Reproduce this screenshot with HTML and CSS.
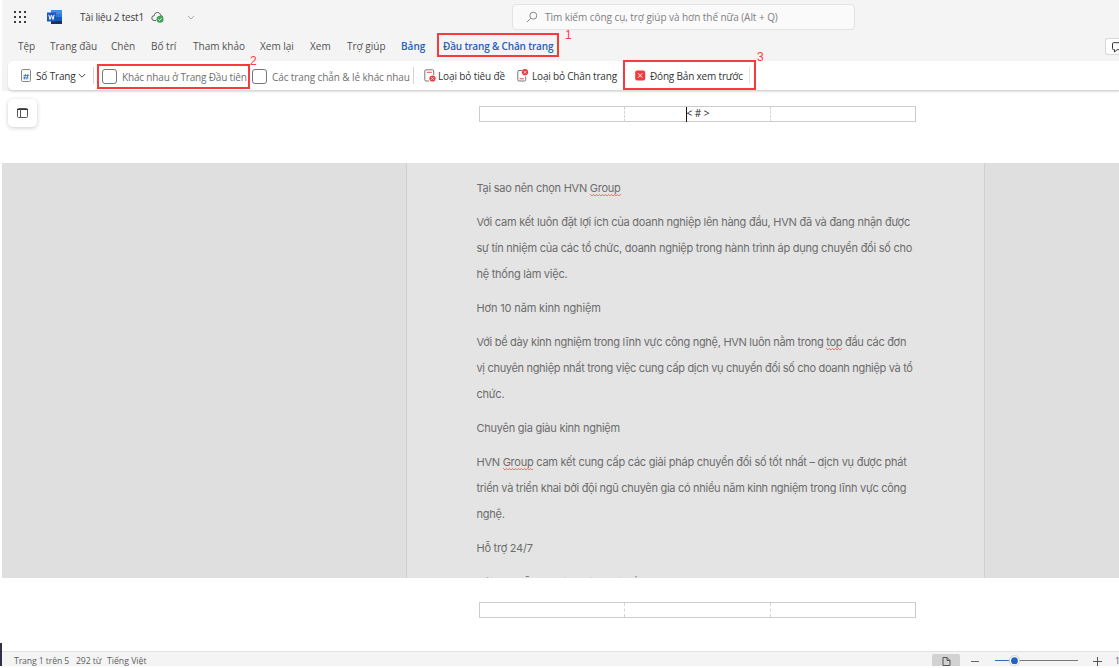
FILE: index.html
```
<!DOCTYPE html>
<html lang="vi">
<head>
<meta charset="utf-8">
<title>Tài liệu 2 test1</title>
<link rel="stylesheet" href="styles.css">
</head>
<body>
<div class="app">
  <header class="top">
    <div class="titlebar">
      <svg class="waffle" width="12" height="12" viewBox="0 0 12 12" fill="#3a3a40"><path d="M0 0h2v2H0zM5 0h2v2H5zM10 0h2v2h-2zM0 5h2v2H0zM5 5h2v2H5zM10 5h2v2h-2zM0 10h2v2H0zM5 10h2v2H5zM10 10h2v2h-2z"/></svg>
      <svg class="word" width="15" height="14" viewBox="0 0 15 14"><rect x="4" y="0" width="11" height="14" rx="1" fill="#2b7cd3"/><rect x="4" y="0" width="11" height="4" fill="#3f8fdc"/><rect x="4" y="7" width="11" height="4" fill="#185abd"/><rect x="4" y="11" width="11" height="3" fill="#17325f"/><rect x="0" y="2.5" width="9" height="9" fill="#185abd"/><path d="M1.800 4.800l1.200 4.700 1.500-4.500 1.500 4.500 1.200-4.700" fill="none" stroke="#fff" stroke-width="1"/></svg>
      <span class="docname">Tài liệu 2 test1</span>
      <svg class="cloud" width="13" height="12" viewBox="0 0 13 12"><path d="M5 9.500H3.200a2.400 2.400 0 0 1 0-4.800C3.400 2.700 4.600 1.500 6.400 1.500s3 1.200 3.300 3c1.200 0 1.800.7 2 1.500" fill="none" stroke="#555" stroke-width="1"/><circle cx="9" cy="8.200" r="3.500" fill="#3fa35c"/><path d="M7.400 8.300l1.200 1.100 2-2.200" fill="none" stroke="#fff" stroke-width=".9"/></svg>
      <svg class="more" width="8" height="5" viewBox="0 0 8 5"><path d="M1 1l3 3 3-3" fill="none" stroke="#aaa"/></svg>
      <div class="search">
        <svg width="12" height="12" viewBox="0 0 12 12"><path d="M4.500 7.500L1 11" stroke="#888" fill="none"/><circle cx="7.300" cy="4.700" r="3.500" fill="none" stroke="#888"/></svg>
        <span>Tìm kiếm công cụ, trợ giúp và hơn thế nữa (Alt + Q)</span>
      </div>
    </div>
    <nav class="tabs">
      <span>Tệp</span><span>Trang đầu</span><span>Chèn</span><span>Bố trí</span><span>Tham khảo</span><span>Xem lại</span><span>Xem</span><span>Trợ giúp</span><span class="ctx">Bảng</span><span class="ctx active">Đầu trang &amp; Chân trang</span>
      <div class="comment"><svg width="12" height="11" viewBox="0 0 12 11"><path d="M11 .7H1.500a1 1 0 0 0-1 1v5a1 1 0 0 0 1 1H2.500v2.300l2.600-2.300H12" fill="none" stroke="#333"/></svg></div>
    </nav>
    <div class="ribbon">
      <svg width="10" height="13" viewBox="0 0 10 13"><rect x=".5" y=".5" width="9" height="12" rx="1.200" fill="#f8f8f8" stroke="#888"/><path d="M4.500 5L3.300 10.500M7 5L5.800 10.500M2.500 6.600h5.500M2 8.900h5.500" stroke="#2b6cc4" stroke-width=".8"/></svg>
      <span class="dark num">Số Trang</span>
      <svg width="8" height="6" viewBox="0 0 8 6"><path d="M.8 1l3.200 3.200L7.200 1" fill="none" stroke="#444"/></svg>
      <i class="sep"></i>
      <i class="box"></i><span class="first">Khác nhau ở Trang Đầu tiên</span>
      <i class="box"></i><span class="odd">Các trang chẵn &amp; lẻ khác nhau</span>
      <i class="sep"></i>
      <svg width="12" height="13" viewBox="0 0 12 13"><path d="M5 12H2a1.200 1.200 0 0 1-1.200-1.200V2A1.200 1.200 0 0 1 2 .8h6.500A1.200 1.200 0 0 1 9.700 2v4" fill="none" stroke="#777"/><path d="M2.800 3.300h5" stroke="#f04a4a"/><circle cx="8.500" cy="9.500" r="3.100" fill="#f03a3e"/><path d="M7.200 8.200l2.600 2.600m0-2.600l-2.600 2.600" stroke="#fff" stroke-width=".7"/></svg>
      <span class="dark rmh">Loại bỏ tiêu đề</span>
      <svg width="12" height="13" viewBox="0 0 12 13"><path d="M5 1.500H2A1.200 1.200 0 0 0 .8 2.700v8A1.200 1.200 0 0 0 2 12h5.500a1.200 1.200 0 0 0 1.200-1.200V7.500" fill="none" stroke="#777"/><path d="M2.500 9.800h4.500" stroke="#f04a4a"/><circle cx="8" cy="3.200" r="3.100" fill="#f03a3e"/><path d="M6.700 1.900l2.600 2.600m0-2.600L6.700 4.500" stroke="#fff" stroke-width=".7"/></svg>
      <span class="dark rmf">Loại bỏ Chân trang</span>
      <svg width="11" height="11" viewBox="0 0 11 11"><rect x=".2" y=".5" width="10" height="10" rx="2" fill="#f03a3e"/><path d="M3.100 3.300l4.200 4.400m0-4.400L3.100 7.700" stroke="#fff"/></svg>
      <span class="dark close">Đóng Bản xem trước</span>
      <i class="sep light"></i>
    </div>
  </header>

  <section class="margin head">
    <button class="pane"><svg width="11" height="10" viewBox="0 0 11 10"><rect x=".5" y=".5" width="10" height="9" rx="1" fill="#fff" stroke="#555"/><path d="M0 1.500h11" stroke="#333"/><path d="M3.500 1.500v8" stroke="#555"/></svg></button>
    <div class="cells"><div></div><div><b class="caret"></b>&lt; # &gt;</div><div></div></div>
  </section>

  <main class="canvas">
    <article class="page">
      <p>Tại sao nên chọn HVN <u>Group</u></p>
      <p>Với cam kết luôn đặt lợi ích của doanh nghiệp lên hàng đầu, HVN đã và đang nhận được<br>sự tín nhiệm của các tổ chức, doanh nghiệp trong hành trình áp dụng chuyển đổi số cho<br>hệ thống làm việc.</p>
      <p class="wide">Hơn 10 năm kinh nghiệm</p>
      <p><span class="snug">Với bề dày kinh nghiệm trong lĩnh vực công nghệ, HVN luôn nằm trong <u>top</u> đầu các đơn</span><br><span class="tight">vị chuyên nghiệp nhất trong việc cung cấp dịch vụ chuyển đổi số cho doanh nghiệp và tổ</span><br>chức.</p>
      <p>Chuyên gia giàu kinh nghiệm</p>
      <p>HVN <u>Group</u> cam kết cung cấp các giải pháp chuyển đổi số tốt nhất – dịch vụ được phát<br><span class="snug">triển và triển khai bởi đội ngũ chuyên gia có nhiều năm kinh nghiệm trong lĩnh vực công</span><br>nghệ.</p>
      <p>Hỗ trợ 24/7</p>
      <p class="next">Đội ngũ hỗ trợ khách hàng có kết</p>
    </article>
  </main>

  <section class="margin foot"><div class="cells"><div></div><div></div><div></div></div></section>

  <footer class="status">
    <span class="s1">Trang 1 trên 5</span><span class="s2">292 từ</span><span class="s3">Tiếng Việt</span>
    <div class="view"><svg width="9" height="11" viewBox="0 0 9 11"><path d="M1 1.500h4L8 4.500v5H1zM5 1.500v3h3" fill="none" stroke="#555"/></svg></div>
    <i class="minus"></i>
    <svg class="slider" width="84" height="12" viewBox="0 0 84 12"><path d="M0 5.500h18" stroke="#2b6cc4"/><path d="M20 5.500h63" stroke="#777"/><circle cx="19.500" cy="5.800" r="5.200" fill="#fff" stroke="#ccc"/><circle cx="19.500" cy="5.800" r="3.500" fill="#2464c4"/></svg>
    <svg class="plus" width="9" height="9" viewBox="0 0 9 9"><path d="M0 4.500h9M4.500 0v9" stroke="#555"/></svg>
    <span class="pct">100%</span>
  </footer>

  <i class="edge"></i>
  <i class="mark m1"></i><b class="no n1">1</b>
  <i class="mark m2"></i><b class="no n2">2</b>
  <i class="mark m3"></i><b class="no n3">3</b>
</div>
</body>
</html>
```
FILE: styles.css
```
* { box-sizing: border-box; }
body { margin: 0; background: #fff; font-family: "Open Sans", "Noto Sans", sans-serif; font-size: 10px; color: #505050; }
svg { display: block; flex: none; }
.app { position: relative; width: 1119px; height: 668px; overflow: hidden; padding-left: 2px; display: flex; flex-direction: column; white-space: nowrap; }
.top { background: #f4f4f4; height: 91px; flex: none; position: relative; z-index: 1; }

.titlebar { height: 34px; display: flex; align-items: center; padding-left: 12px; }
.word { margin-left: 21px; }
.docname { width: 64px; margin-left: 18px; color: #3c3c3c; letter-spacing: -.2px; }
.cloud { margin-left: 7px; }
.more { margin-left: 23px; }
.search { margin-left: 317px; width: 343px; height: 26px; border: 1px solid #e3e3e3; border-radius: 4px; background: #fafafa; display: flex; align-items: center; padding-left: 13px; gap: 7px; color: #808080; letter-spacing: -.05px; }

.tabs { height: 27px; display: grid; grid-template-columns: 32px 61px 40px 42px 67px 50px 37px 54px 42px 110px 1fr; padding-left: 16px; align-items: center; line-height: 24px; padding-bottom: 3px; }
.ctx { color: #2560b8; font-weight: 600; }
.active { border-bottom: 1px solid #2560b8; line-height: 16px; height: 18px; margin-top: 2px; letter-spacing: -.17px; }
.comment { justify-self: end; width: 14px; height: 17px; background: #fff; border: 1px solid #d8d8d8; border-right: 0; border-radius: 3px 0 0 3px; padding: 3px 0 0 6px; overflow: hidden; }

.ribbon { margin-left: 6px; height: 30px; background: #fff; border-bottom: 1px solid #d9d9d9; border-radius: 5px 0 0 5px; box-shadow: 0 1px 2px #0002; display: grid; grid-template-columns: 15px 42px 15px 9px 20px 130px 19px 142px 10px 14px 79px 15px 103px 15px 100px 1px; align-items: center; padding-left: 13px; color: #707070; }
.dark { color: #333; }
.num { letter-spacing: -.15px; }
.sep { width: 1px; height: 17px; background: #d4d4d4; }
.light { background: #e6e6e6; }
.box { width: 15px; height: 15px; border: 1px solid #777; border-radius: 3px; position: relative; top: 1px; }
.first, .odd { padding-top: 2px; }
.first { letter-spacing: -.17px; }
.odd { padding-left: 1px; letter-spacing: -.1px; }
.rmh { padding-left: 1px; letter-spacing: -.12px; }
.rmf { padding-left: 1px; letter-spacing: -.18px; }
.close { padding-left: 1px; letter-spacing: -.18px; }
.ribbon .sep ~ svg { margin-left: 1px; }

.margin { display: flex; justify-content: flex-start; flex: none; }
.head { height: 72px; padding-left: 6px; }
.pane { width: 29px; height: 28px; margin: 8px 442px 0 0; padding: 0; border: 0; border-radius: 5px; background: #fff; box-shadow: 0 1px 4px #0003; display: grid; place-items: center; }
.cells { width: 437px; height: 16px; margin-top: 15px; border: 1px solid #ccc; display: grid; grid-template-columns: 145px 146px 144px; }
.cells > div { text-align: center; line-height: 13px; font-size: 10px; color: #222; }
.cells > div + div { border-left: 1px dashed #d4d4d4; margin-left: -1px; }
.caret { display: inline-block; width: 1px; height: 15px; margin-right: -1px; background: #111; vertical-align: top; }

.canvas { height: 415px; flex: none; background: #dfdfdf; overflow: hidden; padding-left: 404px; }
.page { width: 579px; height: 430px; background: #e4e4e4; border: solid #cfcfcf; border-width: 0 1px; padding: 12px 0 0 69.500px; font-family: Inter, sans-serif; font-size: 11px; letter-spacing: -.25px; line-height: 26.100px; color: #6c6c6c; }
.page p { margin: 0 0 7.900px; }
.page .wide { letter-spacing: -.15px; }
.page .next { padding-top: 1px; }
.snug { letter-spacing: -.29px; }
.tight { letter-spacing: -.32px; }
.page u { text-decoration: none; padding-bottom: 1px; background: linear-gradient(90deg, #e87a70 50%, transparent 50%) 0 calc(100% - 1px) / 3px 1px repeat-x, linear-gradient(90deg, transparent 40%, #e87a70 40%) 0 100% / 3px 1px repeat-x; }

.foot { height: 73px; padding-left: 477px; }
.foot .cells { margin-top: 24px; }

.status { height: 15px; flex: none; background: #f4f4f4; border-top: 1px solid #e2e2e2; display: flex; align-items: center; padding-left: 12px; font-size: 8.700px; line-height: 14px; padding-top: 4px; color: #606060; overflow: hidden; }
.status span, .view { flex: none; }
.s1 { width: 62px; letter-spacing: -.12px; } .s2 { width: 31px; letter-spacing: -.1px; } .s3 { width: 825px; }
.view { width: 28px; height: 15px; background: #d2d2d2; border-radius: 2px 2px 0 0; display: grid; place-items: center; }
.minus { flex: none; width: 8px; height: 1px; background: #666; margin-left: 11px; }
.slider { margin-left: 16px; }
.plus { margin-left: 14px; }
.pct { margin-left: 13px; }

.edge { position: absolute; left: 0; top: 643px; width: 2px; height: 23px; background: #303048; }
.mark { position: absolute; z-index: 2; border: 2px solid #f83a3a; }
.m1 { left: 437px; top: 33px; width: 122px; height: 24px; }
.m2 { left: 97px; top: 64px; width: 153px; height: 25px; }
.m3 { left: 623px; top: 60px; width: 133px; height: 30px; }
.no { position: absolute; z-index: 2; color: #f84040; font: 12px/12px "Liberation Sans", sans-serif; }
.n1 { left: 565px; top: 29px; }
.n2 { left: 250px; top: 55px; }
.n3 { left: 757px; top: 51px; }
```
